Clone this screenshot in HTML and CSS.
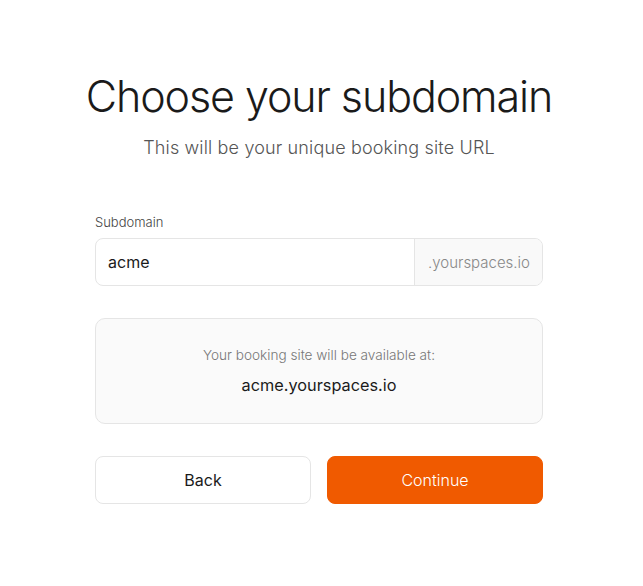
FILE: index.html
```html
<!DOCTYPE html>
<html>
<head>
<meta charset="utf-8">
<link rel="stylesheet" href="styles.css">
</head>
<body>
<main class="page">
  <div class="card">
    <h1 class="title">Choose your subdomain</h1>
    <p class="subtitle">This will be your unique booking site URL</p>
    <div class="field">
      <label class="label">Subdomain</label>
      <div class="input-group">
        <div class="input">acme</div>
        <div class="suffix">.yourspaces.io</div>
      </div>
    </div>
    <div class="preview">
      <div class="preview-caption">Your booking site will be available at:</div>
      <div class="preview-url">acme.yourspaces.io</div>
    </div>
    <div class="actions">
      <button class="btn btn-back">Back</button>
      <button class="btn btn-continue">Continue</button>
    </div>
  </div>
</main>
</body>
</html>
```
FILE: styles.css
```css
* { box-sizing: border-box; }
html, body { margin: 0; padding: 0; background: #fff; }
body {
  font-family: Inter, "Noto Sans", sans-serif;
  color: #1a1a1a;
}
.page {
  display: flex;
  justify-content: center;
  padding: 66px 5px 0 0;
}
.card {
  width: 448px;
  display: flex;
  flex-direction: column;
}
.title {
  margin: 0 -40px;
  text-align: center;
  white-space: nowrap;
  font-size: 43px;
  font-weight: 300;
  letter-spacing: -1.1px;
  line-height: 60px;
  color: #1a1a1a;
}
.subtitle {
  margin: 8px 0 0;
  text-align: center;
  font-size: 18px;
  font-weight: 300;
  letter-spacing: 0.15px;
  line-height: 28px;
  color: #555;
}
.field {
  margin-top: 51px;
  display: flex;
  flex-direction: column;
  gap: 7px;
}
.label {
  font-size: 13px;
  font-weight: 300;
  line-height: 18px;
  color: #444;
}
.input-group {
  display: flex;
  height: 48px;
  border: 1px solid #e5e5e5;
  border-radius: 8px;
  overflow: hidden;
}
.input {
  flex: 1;
  display: flex;
  align-items: center;
  padding: 0 12px;
  font-size: 16px;
  color: #1a1a1a;
}
.suffix {
  display: flex;
  align-items: center;
  padding: 0 12px 0 13px;
  background: #f9f9f9;
  border-left: 1px solid #e5e5e5;
  font-size: 15px;
  font-weight: 300;
  color: #888;
}
.preview {
  margin-top: 32px;
  height: 106px;
  background: #fafafa;
  border: 1px solid #e5e5e5;
  border-radius: 10px;
  display: flex;
  flex-direction: column;
  align-items: center;
  justify-content: center;
  gap: 12px;
}
.preview-caption {
  font-size: 13.6px;
  font-weight: 300;
  color: #777;
}
.preview-url {
  font-size: 16.3px;
  font-weight: 400;
  color: #1a1a1a;
}
.actions {
  margin-top: 32px;
  display: flex;
  gap: 16px;
}
.btn {
  flex: 1;
  height: 48px;
  border-radius: 8px;
  font-family: inherit;
  font-size: 16px;
  font-weight: 400;
  cursor: pointer;
}
.btn-back {
  background: #fff;
  border: 1px solid #e5e5e5;
  color: #1a1a1a;
}
.btn-continue {
  background: #f05a00;
  border: 1px solid #f05a00;
  color: #fff;
  font-weight: 300;
}
```
